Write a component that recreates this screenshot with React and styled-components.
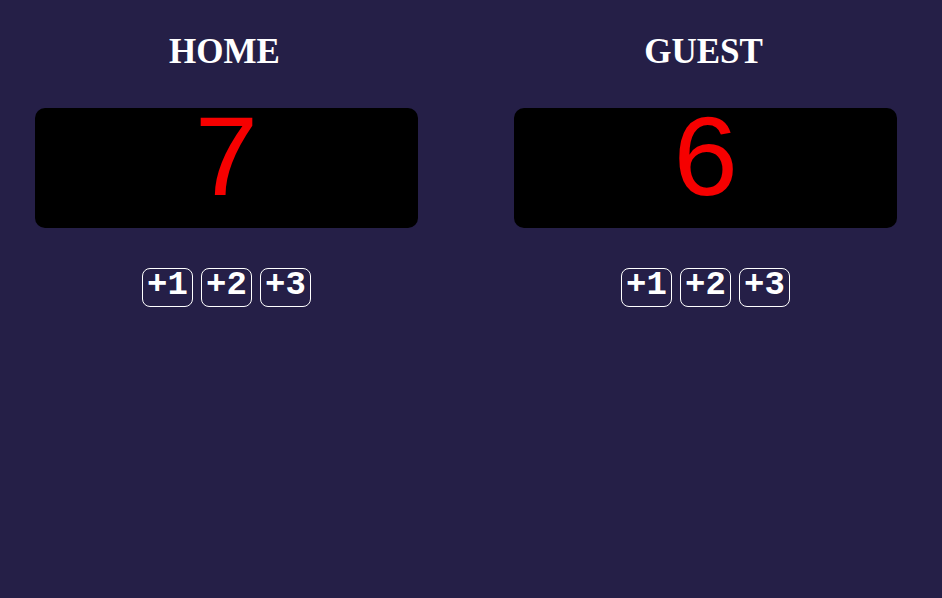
import React, { useState } from "react";
import styled, { createGlobalStyle } from "styled-components";

const GlobalStyle = createGlobalStyle`
  * { box-sizing: border-box; }
  body {
    margin: 0;
    background: #251f47;
    color: #ffffff;
    font-family: "Liberation Serif", "Times New Roman", serif;
  }
`;

const Scoreboard = styled.main`
  display: grid;
  grid-template-columns: 1fr 1fr;
  column-gap: 96px;
  padding: 32px 45px 0 35px;
`;

const Team = styled.section`
  display: flex;
  flex-direction: column;
`;

const TeamName = styled.h2`
  margin: 0 0 36px;
  padding-right: 4px;
  font-size: 35px;
  line-height: 40px;
  font-weight: 700;
  text-align: center;
`;

const Score = styled.output`
  display: block;
  height: 120px;
  border-radius: 10px;
  background: #000000;
  color: #f60000;
  font-family: "Liberation Mono", "Courier New", monospace;
  font-size: 116px;
  line-height: 112px;
  font-weight: 400;
  text-align: center;
`;

const Controls = styled.div`
  display: flex;
  justify-content: center;
  gap: 8px;
  margin-top: 40px;
`;

const PointsButton = styled.button`
  display: flex;
  justify-content: center;
  width: 51px;
  height: 39px;
  padding: 0;
  border: 1px solid #ffffff;
  border-radius: 8px;
  background: transparent;
  color: #ffffff;
  font-family: "Liberation Mono", "Courier New", monospace;
  font-size: 34px;
  line-height: 32px;
  font-weight: 700;
  cursor: pointer;
`;

const POINTS = [1, 2, 3];

function TeamPanel({ name, initialScore }) {
  const [score, setScore] = useState(initialScore);
  return (
    <Team>
      <TeamName>{name}</TeamName>
      <Score>{score}</Score>
      <Controls>
        {POINTS.map((points) => (
          <PointsButton key={points} type="button" onClick={() => setScore(score + points)}>
            +{points}
          </PointsButton>
        ))}
      </Controls>
    </Team>
  );
}

export default function App() {
  return (
    <>
      <GlobalStyle />
      <Scoreboard>
        <TeamPanel name="HOME" initialScore={7} />
        <TeamPanel name="GUEST" initialScore={6} />
      </Scoreboard>
    </>
  );
}
